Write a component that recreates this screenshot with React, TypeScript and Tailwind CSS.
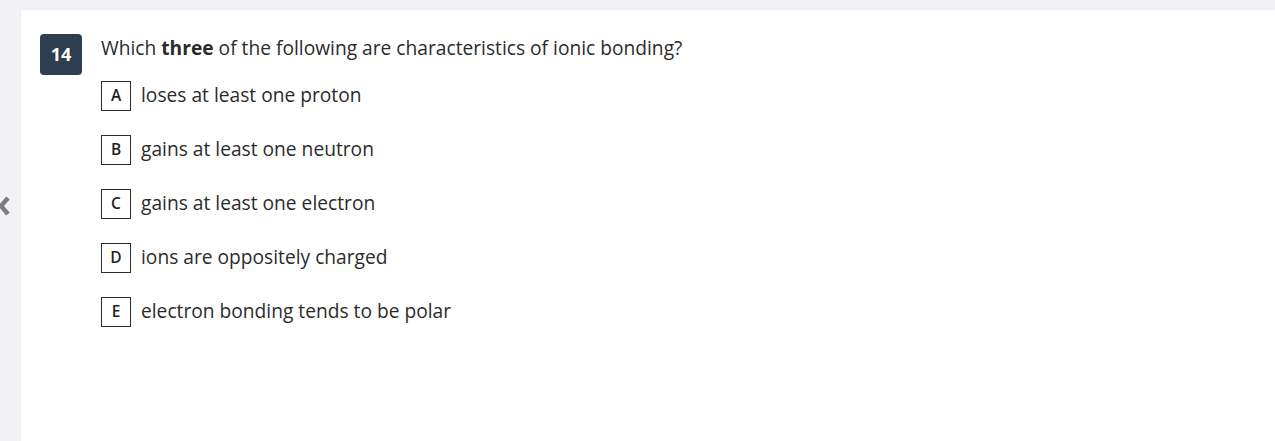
import React, { FC } from "react";

const options = [
    { letter: "A", text: "loses at least one proton" },
    { letter: "B", text: "gains at least one neutron" },
    { letter: "C", text: "gains at least one electron" },
    { letter: "D", text: "ions are oppositely charged" },
    { letter: "E", text: "electron bonding tends to be polar" },
];

const App: FC = () => {
    return (
        <div
            className="relative h-[441px] w-[1275px] overflow-hidden bg-[#f2f2f6] pl-[21px] pt-[10px]"
            style={{ fontFamily: "'Open Sans', sans-serif" }}
        >
            {/* back arrow */}
            <div className="absolute left-[-3px] top-[195px] text-[#7d7d7d]">
                <svg width="14" height="22" viewBox="0 0 14 22">
                    <path d="M11 3 L4 11 L11 19" fill="none" stroke="currentColor" strokeWidth="4.5" strokeLinecap="butt" strokeLinejoin="miter" />
                </svg>
            </div>

            <div className="flex h-full gap-[19px] rounded-tl-[3px] bg-white pl-[19px] pt-[24px] shadow-[0_0_2px_rgba(0,0,0,0.08)]">
                <div className="flex h-[41px] w-[42px] shrink-0 items-center justify-center rounded-[4px] bg-[#2d3e50] text-[18px] font-bold text-white">
                    14
                </div>
                <div className="flex flex-col">
                    <p className="mt-[1px] text-[19.2px] leading-[26px] text-[#2b2b2b]">
                        Which <b className="font-bold">three</b> of the following are characteristics of ionic bonding?
                    </p>
                    <div className="mt-[20px] flex flex-col gap-[24px]">
                        {options.map((o) => (
                            <div key={o.letter} className="flex h-[30px] items-center gap-[10px]">
                                <div className="flex h-[30px] w-[30px] items-center justify-center border border-[#2b2b2b] text-[15.5px] font-semibold text-[#1f1f1f]">
                                    {o.letter}
                                </div>
                                <span className="-mt-[3px] text-[19.2px] leading-[26px] text-[#2b2b2b]">{o.text}</span>
                            </div>
                        ))}
                    </div>
                </div>
            </div>
        </div>
    );
};

export default App;
